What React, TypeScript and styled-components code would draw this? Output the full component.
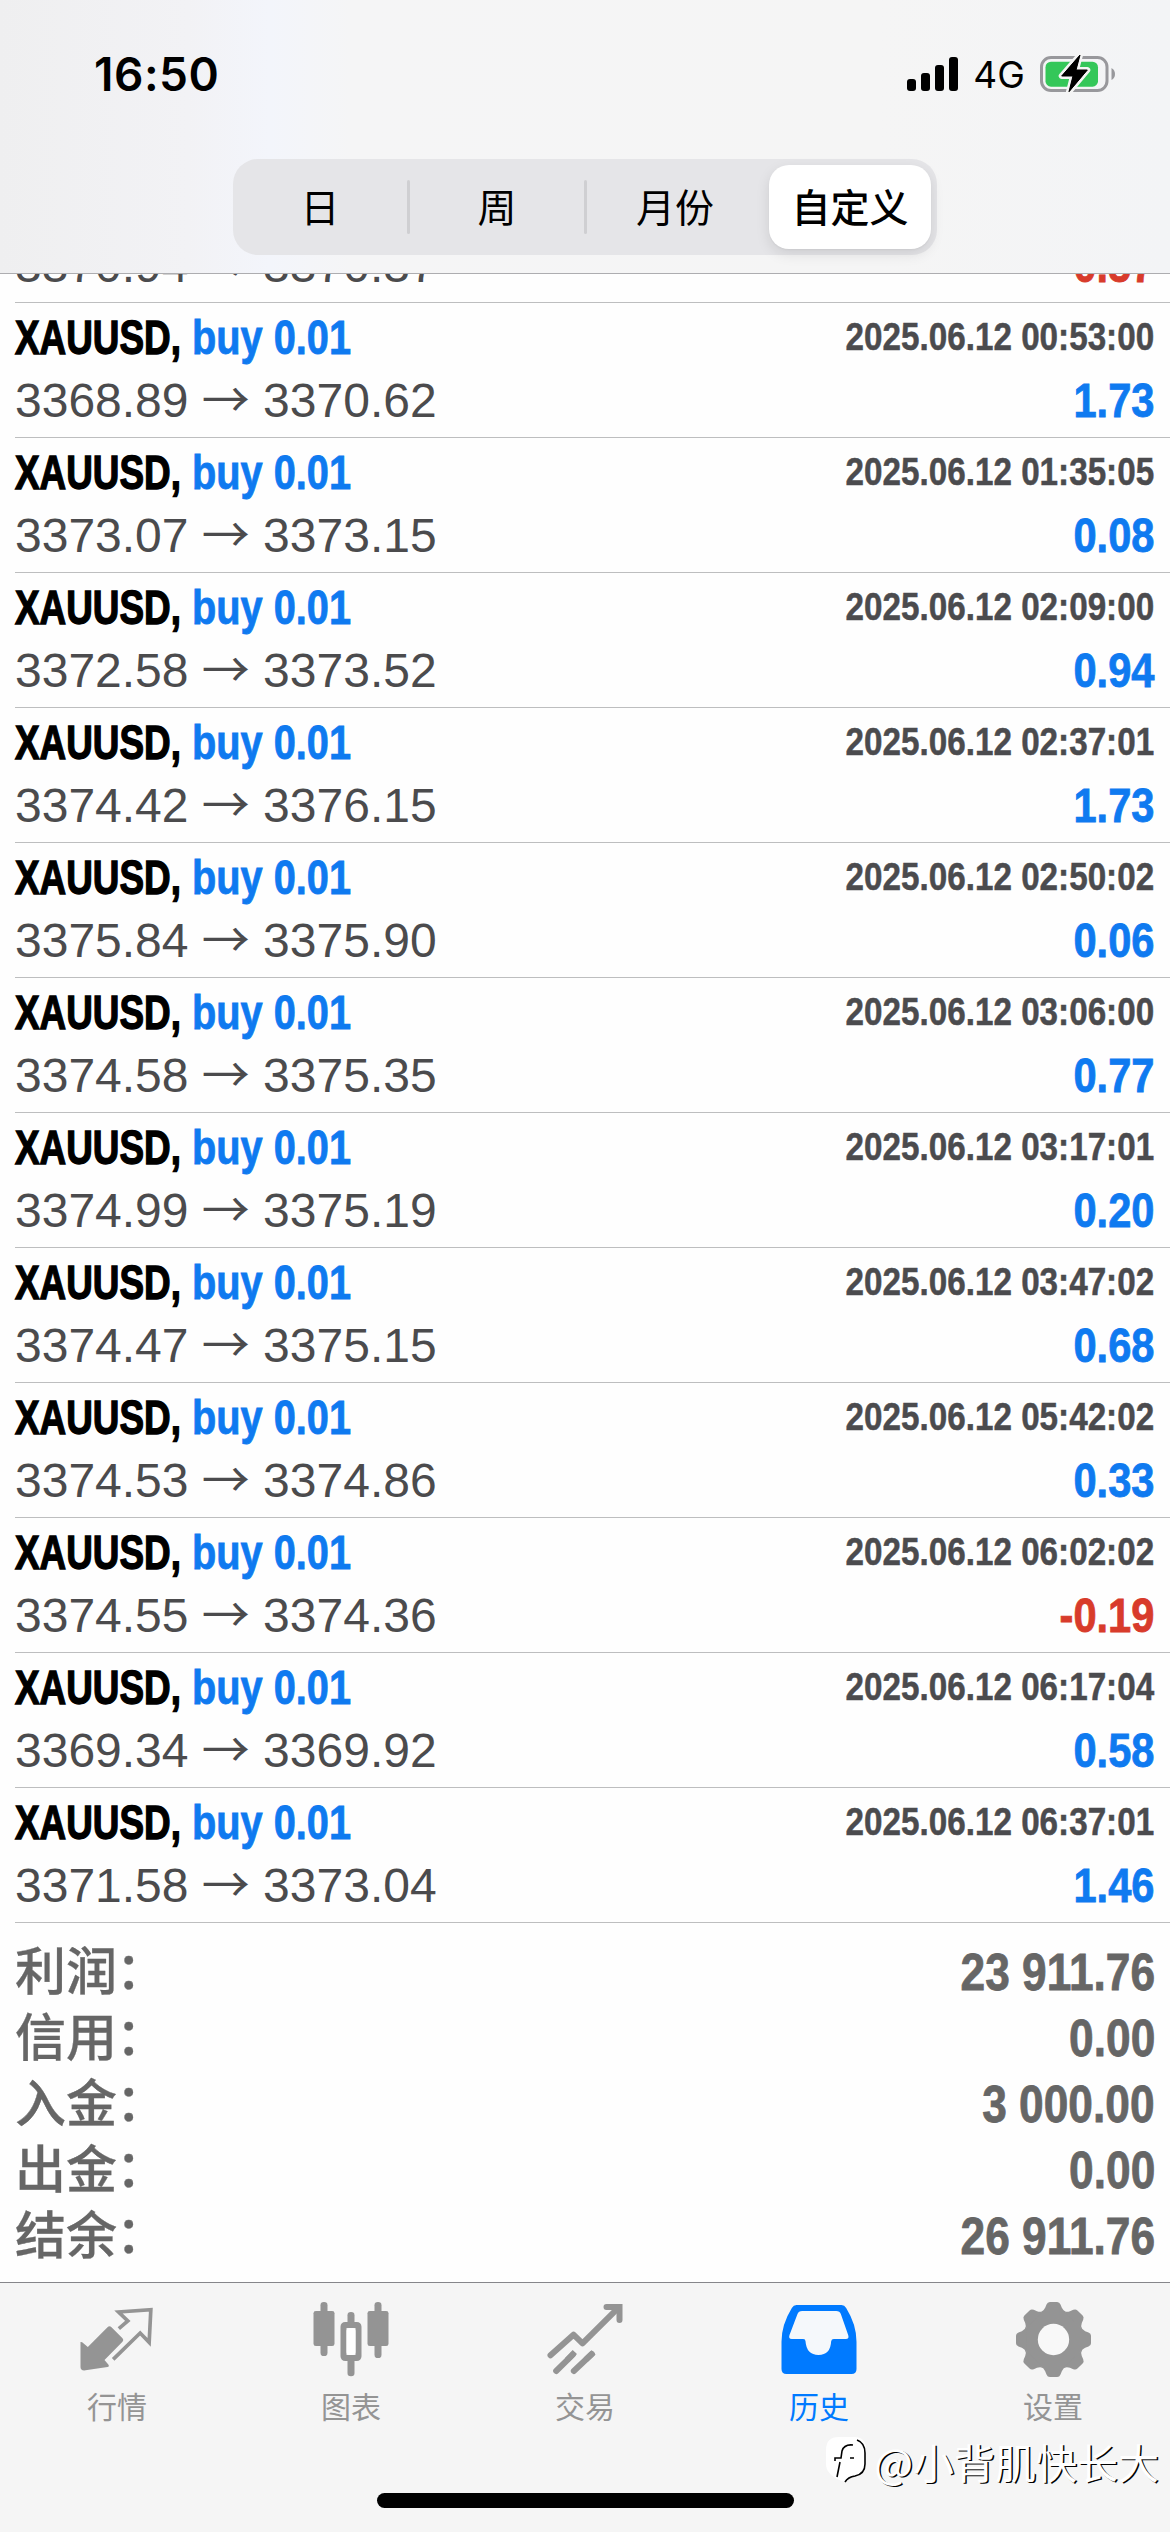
import React from "react";
import styled, { createGlobalStyle, css } from "styled-components";

const SANS = `"Liberation Sans", "Noto Sans CJK SC", sans-serif`;
const SYSTEM = `Inter, "Noto Sans CJK SC", sans-serif`;
const CJK = `"Noto Sans CJK SC", "Liberation Sans", sans-serif`;

const GlobalStyle = createGlobalStyle`
  * { box-sizing: border-box; }
  html, body { margin: 0; padding: 0; background: #fff; }
`;

const Screen = styled.main`
  position: relative;
  display: flex;
  flex-direction: column;
  width: 1170px;
  height: 2532px;
  overflow: hidden;
  background: #fefefe;
`;

const Header = styled.header`
  display: flex;
  flex-direction: column;
  align-items: center;
  flex: none;
  height: 274px;
  border-bottom: 1px solid #adadb0;
  background: linear-gradient(90deg, #efeff0 0, #f2f2f5 16%, #f3f5fb 23%, #f5f5f6 30%, #f5f5f5 75%, #f3f4f6 100%);
`;

const StatusBar = styled.div`
  display: flex;
  align-items: center;
  justify-content: space-between;
  width: 100%;
  height: 159px;
  padding: 0 55px 11px 94px;
`;

const Clock = styled.time`
  font: 600 46px/56px ${SYSTEM};
  letter-spacing: 0.5px;
  color: #000;
`;

const StatusIcons = styled.div`
  display: flex;
  align-items: center;
`;

const Network = styled.span`
  width: 82px;
  padding-top: 2px;
  text-align: center;
  font: 400 37px/44px ${SYSTEM};
  color: #000;
`;

const Segments = styled.div`
  display: flex;
  align-items: center;
  width: 704px;
  height: 96px;
  padding: 6px 6px 6px 0;
  border-radius: 25px;
  background: #e5e5e8;
`;

const Segment = styled.button<{ $selected?: boolean; $width: number }>`
  display: flex;
  align-items: center;
  justify-content: center;
  flex: none;
  width: ${(p) => p.$width}px;
  height: 84px;
  padding: 0 0 5px;
  border: 0;
  border-radius: 20px;
  color: #000;
  background: transparent;
  font: 400 39px/56px ${CJK};
  ${(p) =>
    p.$selected &&
    css`
      margin-left: auto;
      background: #fff;
      font-weight: 500;
      box-shadow: 0 5px 14px rgba(0, 0, 0, 0.1), 0 1px 2px rgba(0, 0, 0, 0.04);
    `}
`;

const SegmentDivider = styled.span`
  flex: none;
  width: 3px;
  height: 54px;
  border-radius: 2px;
  background: #cfcfd2;
`;

const History = styled.section`
  display: flex;
  flex-direction: column;
  justify-content: flex-end;
  flex: none;
  height: 1649px;
  overflow: hidden;
`;

const Deal = styled.article`
  display: flex;
  flex-direction: column;
  justify-content: flex-end;
  flex: none;
  margin-left: 15px;
  padding: 3px 16px 5px 0;
  border-bottom: 1px solid #bdbebf;
`;

const DealLine = styled.div`
  display: flex;
  align-items: flex-start;
  justify-content: space-between;
  height: 63px;
  white-space: pre;
`;

const Condensed = styled.span`
  display: inline-block;
  font: 700 48px/63px ${SANS};
  -webkit-text-stroke: 0.8px currentColor;
`;

const Instrument = styled(Condensed)`
  margin-right: -52.5px;
  transform: scaleX(0.768);
  transform-origin: left;
  color: #000;
  -webkit-text-stroke-width: 1.4px;
`;

const Side = styled(Condensed)`
  transform: scaleX(0.828);
  transform-origin: left;
  color: #0f7af0;
`;

const Stamp = styled(Condensed)`
  transform: scaleX(0.852);
  transform-origin: right;
  font-size: 39px;
  line-height: 61px;
  color: #4b4b4e;
  -webkit-text-stroke-width: 0.5px;
`;

const Prices = styled.span`
  display: flex;
  align-items: baseline;
  font: 400 48px/63px ${SANS};
  color: #4b4b4d;
`;

const Arrow = styled.span`
  width: 74.6px;
  text-align: center;
  font: 400 48px/48px ${CJK};
`;

const Result = styled(Condensed)<{ $loss: boolean }>`
  transform: scaleX(0.867);
  transform-origin: right;
  color: ${(p) => (p.$loss ? "#d83b2b" : "#0f7af0")};
`;

const Totals = styled.dl`
  display: flex;
  flex-direction: column;
  flex: 1;
  margin: 0;
  padding: 12px 15px 0 15px;
`;

const Total = styled.div`
  display: flex;
  align-items: baseline;
  justify-content: space-between;
  height: 66px;
`;

const TotalLabel = styled.dt`
  font: 500 51px/66px ${CJK};
  -webkit-text-stroke: 0.3px currentColor;
  color: #666;
`;

const Colon = styled.span`
  display: inline-block;
  transform: translate(-1px, -1px);
`;

const TotalValue = styled.dd`
  margin: 0;
  transform: scaleX(0.868);
  transform-origin: right;
  font: 700 51px/66px ${SANS};
  -webkit-text-stroke: 0.8px currentColor;
  color: #666;
`;

const TabBar = styled.nav`
  display: flex;
  align-items: flex-start;
  flex: none;
  height: 250px;
  padding-top: 19px;
  border-top: 1px solid #86868a;
  background: #f5f5f5;
`;

const Tab = styled.a<{ $active: boolean }>`
  display: flex;
  flex-direction: column;
  align-items: center;
  flex: 1;
  color: ${(p) => (p.$active ? "#007aff" : "#949494")};
`;

const TabIcon = styled.svg`
  display: block;
  width: 75px;
  height: 75px;
`;

const TabLabel = styled.span`
  margin-top: 11px;
  font: 400 30px/34px ${CJK};
`;

const HomeIndicator = styled.div`
  position: absolute;
  left: 377px;
  bottom: 24px;
  width: 417px;
  height: 15px;
  border-radius: 8px;
  background: #000;
`;

const Watermark = styled.div`
  position: absolute;
  right: 11px;
  bottom: 41px;
  display: flex;
  align-items: center;
  font: 400 41px/60px ${CJK};
  color: #fff;
  text-shadow: 1.5px 1px 0 #000;
`;

type DealRow = { open: string; close: string; profit: string; time?: string };

const deals: DealRow[] = [
  { open: "3370.94", close: "3370.37", profit: "-0.57" },
  { open: "3368.89", close: "3370.62", time: "2025.06.12 00:53:00", profit: "1.73" },
  { open: "3373.07", close: "3373.15", time: "2025.06.12 01:35:05", profit: "0.08" },
  { open: "3372.58", close: "3373.52", time: "2025.06.12 02:09:00", profit: "0.94" },
  { open: "3374.42", close: "3376.15", time: "2025.06.12 02:37:01", profit: "1.73" },
  { open: "3375.84", close: "3375.90", time: "2025.06.12 02:50:02", profit: "0.06" },
  { open: "3374.58", close: "3375.35", time: "2025.06.12 03:06:00", profit: "0.77" },
  { open: "3374.99", close: "3375.19", time: "2025.06.12 03:17:01", profit: "0.20" },
  { open: "3374.47", close: "3375.15", time: "2025.06.12 03:47:02", profit: "0.68" },
  { open: "3374.53", close: "3374.86", time: "2025.06.12 05:42:02", profit: "0.33" },
  { open: "3374.55", close: "3374.36", time: "2025.06.12 06:02:02", profit: "-0.19" },
  { open: "3369.34", close: "3369.92", time: "2025.06.12 06:17:04", profit: "0.58" },
  { open: "3371.58", close: "3373.04", time: "2025.06.12 06:37:01", profit: "1.46" },
];

const totals = [
  ["利润", "23 911.76"],
  ["信用", "0.00"],
  ["入金", "3 000.00"],
  ["出金", "0.00"],
  ["结余", "26 911.76"],
];

const QuotesIcon = () => (
  <TabIcon viewBox="238.5 96 225 225" fill="none">
    <path
      d="M240 216q2-1 5 1l17 14 59-59q6-6 12 0l33 33q5 5 0 10l-54 55 12 14q3 6-3 7l-66 10q-15 2-15-10z"
      fill="currentColor"
    />
    <path d="M355 176l27-23-28-27 97-7-5 98-27-28-81 79" stroke="currentColor" strokeWidth="11" strokeLinejoin="miter" />
  </TabIcon>
);

const ChartIcon = () => (
  <TabIcon viewBox="940.5 96 225 225" fill="none" overflow="visible">
    <g fill="currentColor">
      <rect x="960" y="96" width="21" height="162" rx="10" />
      <rect x="939" y="123" width="63" height="105" rx="7" />
      <rect x="1122" y="96" width="21" height="168" rx="10" />
      <rect x="1101" y="123" width="63" height="105" rx="7" />
      <rect x="1041" y="126" width="21" height="40" rx="10" />
      <rect x="1041" y="262" width="21" height="57" rx="10" />
    </g>
    <rect x="1029" y="165" width="45" height="99" rx="5" stroke="currentColor" strokeWidth="18" />
    <rect x="1038" y="174" width="27" height="81" rx="9" fill="#fff" />
  </TabIcon>
);

const TradeIcon = () => (
  <TabIcon viewBox="262.5 96 225 225" fill="none" overflow="visible">
    <g stroke="currentColor" strokeWidth="18" strokeLinecap="round">
      <path d="M270 256l69-62 27 26L474 113" strokeLinejoin="round" />
      <path d="M438 111h39v39" strokeLinejoin="miter" />
      <path d="M287 303l50-49M340 303l54-51" />
    </g>
    <g stroke="currentColor" strokeWidth="18">
      <path d="M320 270l23-24M376 269l23-22" />
    </g>
  </TabIcon>
);

const HistoryIcon = () => (
  <TabIcon viewBox="964.5 96 225 225" overflow="visible">
    <path
      d="M1008 105h135q9 0 14 9 31 50 31 101v82q0 15-15 15h-195q-15 0-15-15v-82q0-51 31-101 5-9 14-9z"
      fill="currentColor"
    />
    <path
      d="M1025 123h102q11 0 14 9l22 63q4 12-7 12h-36q-7 0-8 7-2 41-38 41t-39-41q0-7-7-7h-34q-11 0-7-12l24-63q3-9 14-9z"
      fill="#f5f8fb"
    />
  </TabIcon>
);

const SettingsIcon = () => (
  <TabIcon viewBox="-112.5 -112.5 225 225">
    <g fill="currentColor">
      <circle r="89" />
      {[0, 45, 90, 135, 180, 225, 270, 315].map((angle) => (
        <path
          key={angle}
          transform={`rotate(${angle})`}
          d="M-38-82q9-4 13-13l4-10q3-7.500 10-7.500h22q7 0 10 7.500l4 10q4 9 13 13z"
        />
      ))}
    </g>
    <circle r="47" fill="#f8f8f8" />
  </TabIcon>
);

const tabs = [
  { label: "行情", icon: <QuotesIcon /> },
  { label: "图表", icon: <ChartIcon /> },
  { label: "交易", icon: <TradeIcon /> },
  { label: "历史", icon: <HistoryIcon />, active: true },
  { label: "设置", icon: <SettingsIcon /> },
];

const SignalIcon = () => (
  <svg width="51" height="34" viewBox="0 0 51 34">
    <rect x="0" y="22" width="9" height="12" rx="3" />
    <rect x="14" y="16" width="9" height="18" rx="3" />
    <rect x="28" y="8" width="9" height="26" rx="3" />
    <rect x="42" y="0" width="9" height="34" rx="3" />
  </svg>
);

const BatteryIcon = () => (
  <svg width="75" height="42" viewBox="0 -3 75 42">
    <rect x="1.500" y="1.500" width="65.500" height="33" rx="9.500" fill="none" stroke="#98989c" strokeWidth="3" />
    <path d="M71.500 12q3.500 2 3.500 6t-3.500 6z" fill="#98989c" />
    <rect x="5.500" y="5.700" width="52.500" height="25" rx="5.500" fill="#34c759" />
    <path
      d="M40-1L21.700 20H33l-4 15.700L47.300 14H36z"
      fill="#000"
      stroke="#f5f5f5"
      strokeWidth="6"
      strokeLinejoin="round"
      paintOrder="stroke"
    />
    <path d="M40-1L21.700 20H33l-4 15.700L47.300 14H36z" fill="#000" stroke="#000" strokeWidth="1" strokeLinejoin="round" />
  </svg>
);

const WatermarkLogo = () => (
  <svg width="48" height="48" viewBox="0 0 48 48" fill="none">
    <path d="M13 0h15q12 0 12 12v16q0 10-10 11-8 1-11 6Q0 39 0 27V13Q0 0 13 0z" fill="#fff" />
    <g stroke="#000" strokeWidth="1.600">
      <path d="M31 3q8 3 8 13v11q0 10-10 12-7 1-10 6" />
      <path d="M27 8q-9-1-11 6l-1 7H9v3M14 25l-3 15M24 21h4" />
    </g>
  </svg>
);

export default function App() {
  return (
    <Screen>
      <GlobalStyle />
      <Header>
        <StatusBar>
          <Clock>16:50</Clock>
          <StatusIcons>
            <SignalIcon />
            <Network>4G</Network>
            <BatteryIcon />
          </StatusIcons>
        </StatusBar>
        <Segments>
          <Segment $width={174}>日</Segment>
          <SegmentDivider />
          <Segment $width={174}>周</Segment>
          <SegmentDivider />
          <Segment $width={176}>月份</Segment>
          <Segment $width={162} $selected>
            自定义
          </Segment>
        </Segments>
      </Header>
      <History>
        {deals.map((deal) => (
          <Deal key={deal.open}>
            {deal.time && (
              <DealLine>
                <span>
                  <Instrument>XAUUSD, </Instrument>
                  <Side>buy 0.01</Side>
                </span>
                <Stamp>{deal.time}</Stamp>
              </DealLine>
            )}
            <DealLine>
              <Prices>
                {deal.open}
                <Arrow>→</Arrow>
                {deal.close}
              </Prices>
              <Result $loss={deal.profit.startsWith("-")}>{deal.profit}</Result>
            </DealLine>
          </Deal>
        ))}
      </History>
      <Totals>
        {totals.map(([label, value]) => (
          <Total key={label}>
            <TotalLabel>
              {label}
              <Colon>：</Colon>
            </TotalLabel>
            <TotalValue>{value}</TotalValue>
          </Total>
        ))}
      </Totals>
      <TabBar>
        {tabs.map((tab) => (
          <Tab key={tab.label} $active={Boolean(tab.active)}>
            {tab.icon}
            <TabLabel>{tab.label}</TabLabel>
          </Tab>
        ))}
      </TabBar>
      <HomeIndicator />
      <Watermark>
        <WatermarkLogo />
        @小背肌快长大
      </Watermark>
    </Screen>
  );
}
